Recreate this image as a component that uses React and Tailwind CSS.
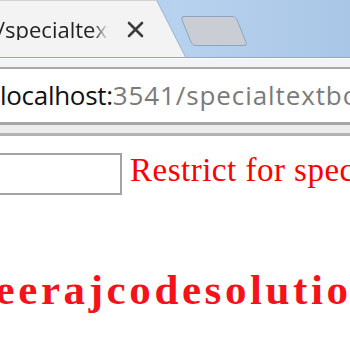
import React from 'react';

export default function App() {
  return (
    <div className="w-[350px] h-[350px] overflow-hidden bg-white relative">
      {/* Tab strip */}
      <div className="h-[58px] flex bg-gradient-to-r from-[#a7c5e7] via-[#b7d2ee] to-[#a9c6e6] border-b border-[#8fa9c6]">
        <div className="w-[186px] h-full shrink-0 bg-[#9fb3c9] [clip-path:polygon(0_0,157px_0,186px_100%,0_100%)]">
          <div className="w-[185px] h-full bg-[#f3f3f3] border-t border-[#d2d2d2] [clip-path:polygon(0_0,156px_0,185px_100%,0_100%)] flex items-center">
            <div className="w-[112px] -ml-[3px] overflow-hidden whitespace-nowrap text-[22px] leading-none text-[#222] [font-family:'Open_Sans',sans-serif] [mask-image:linear-gradient(to_right,black_85%,transparent)]">
              /specialtextbox.aspx
            </div>
            <svg className="ml-[18px] mt-[1px]" width="17" height="17" viewBox="0 0 17 17">
              <path d="M2 2 L15 15 M15 2 L2 15" stroke="#3c3c3c" strokeWidth="2.6" strokeLinecap="round" />
            </svg>
          </div>
        </div>
        <div className="pt-[16px] -ml-[2px]">
          <div className="w-[56px] h-[30px] ml-[2px] bg-[#cacdd3] border border-[#8ea5c2] rounded-[4px] skew-x-[22deg]" />
        </div>
      </div>
      <div className="h-[11px] bg-[#f3f3f3] border-t border-[#fbfbfb] border-b-2 border-b-[#a9a9a9]" />

      {/* Address bar */}
      <div className="h-[53px] flex items-center bg-white whitespace-nowrap text-[26px] leading-none [font-family:'Open_Sans',sans-serif] pb-[2px]">
        <span className="text-[#111] tracking-[-0.3px]">localhost:</span>
        <span className="text-[#7a7a7a] tracking-[0.9px]">3541/specialtextbox.aspx</span>
      </div>
      <div className="h-[3px] bg-[#a6a6a6]" />
      <div className="h-[8px] bg-[#ececec]" />
      <div className="h-[3px] bg-[#b3b3b3]" />

      {/* Page content */}
      <div className="-ml-[60px] pt-[17px] whitespace-nowrap">
        <div className="flex items-end gap-[8px]">
          <input
            type="text"
            className="w-[182px] h-[42px] border-2 border-[#a3a3a3] bg-white outline-none"
          />
          <span className="text-[33px] leading-none pb-[8px] text-[#ff0000] [font-family:'Liberation_Serif',serif] tracking-[0.5px]">
            Restrict for special characters
          </span>
        </div>
        <div className="mt-[73px] ml-[28px] text-[43px] leading-none font-bold text-[#f5121a] [font-family:'Liberation_Serif',serif] tracking-[3.6px]">
          neerajcodesolutions
        </div>
      </div>
    </div>
  );
}
